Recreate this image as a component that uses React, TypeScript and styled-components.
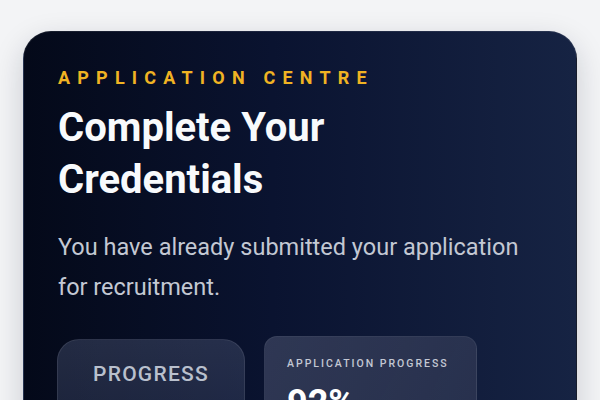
import React from "react";
import styled, { createGlobalStyle } from "styled-components";

const GlobalStyle = createGlobalStyle`
  * { box-sizing: border-box; }
  html, body {
    margin: 0;
    padding: 0;
    background: #f3f4f6;
    font-family: Roboto, "Liberation Sans", Arial, sans-serif;
  }
`;

const Page = styled.div`
  width: 600px;
  height: 400px;
  overflow: hidden;
  padding: 31px 23px 0;
`;

const Card = styled.section`
  border-radius: 28px;
  padding: 34px 34px 40px;
  background: linear-gradient(90deg, #040919 0%, #0a1330 45%, #162343 100%);
  border: 1px solid rgba(255, 255, 255, 0.08);
  box-shadow: 0 10px 30px rgba(15, 23, 42, 0.18);
  color: #fff;
`;

const Eyebrow = styled.div`
  color: #f0b323;
  font-size: 18px;
  font-weight: 700;
  letter-spacing: 0.4em;
  line-height: 24px;
  text-transform: uppercase;
`;

const Title = styled.h1`
  margin: 12px 0 0;
  font-size: 40px;
  font-weight: 700;
  line-height: 52px;
  color: #f8fafc;
  max-width: 330px;
`;

const Lead = styled.p`
  margin: 21px 0 0;
  font-size: 23.5px;
  line-height: 40px;
  color: #c3c8d3;
  max-width: 490px;
`;

const Stats = styled.div`
  display: flex;
  align-items: flex-start;
  gap: 19px;
  margin-top: 29px;
  margin-left: -1px;
`;

const ProgressPill = styled.div`
  width: 188px;
  height: 120px;
  margin-top: 3px;
  border-radius: 22px;
  background: linear-gradient(180deg, rgba(66, 76, 106, 0.5), rgba(48, 58, 88, 0.45));
  border: 1px solid rgba(255, 255, 255, 0.09);
  display: flex;
  justify-content: center;
  padding-top: 22px;
  font-size: 21px;
  font-weight: 500;
  letter-spacing: 0.06em;
  color: #b9c0cd;
`;

const StatCard = styled.div`
  width: 213px;
  height: 120px;
  border-radius: 13px;
  padding: 20px 22px;
  background: linear-gradient(120deg, rgba(60, 68, 96, 0.75), rgba(48, 56, 84, 0.7));
  border: 1px solid rgba(255, 255, 255, 0.06);
`;

const StatLabel = styled.div`
  font-size: 10.5px;
  font-weight: 500;
  letter-spacing: 0.19em;
  color: #c3c8d4;
  line-height: 14px;
`;

const StatValue = styled.div`
  margin-top: 12px;
  font-size: 36px;
  font-weight: 700;
  color: #fff;
  line-height: 40px;
`;

export default function App() {
  return (
    <>
      <GlobalStyle />
      <Page>
        <Card>
          <Eyebrow>Application Centre</Eyebrow>
          <Title>Complete Your Credentials</Title>
          <Lead>You have already submitted your application for recruitment.</Lead>
          <Stats>
            <ProgressPill>PROGRESS</ProgressPill>
            <StatCard>
              <StatLabel>APPLICATION PROGRESS</StatLabel>
              <StatValue>92%</StatValue>
            </StatCard>
          </Stats>
        </Card>
      </Page>
    </>
  );
}
